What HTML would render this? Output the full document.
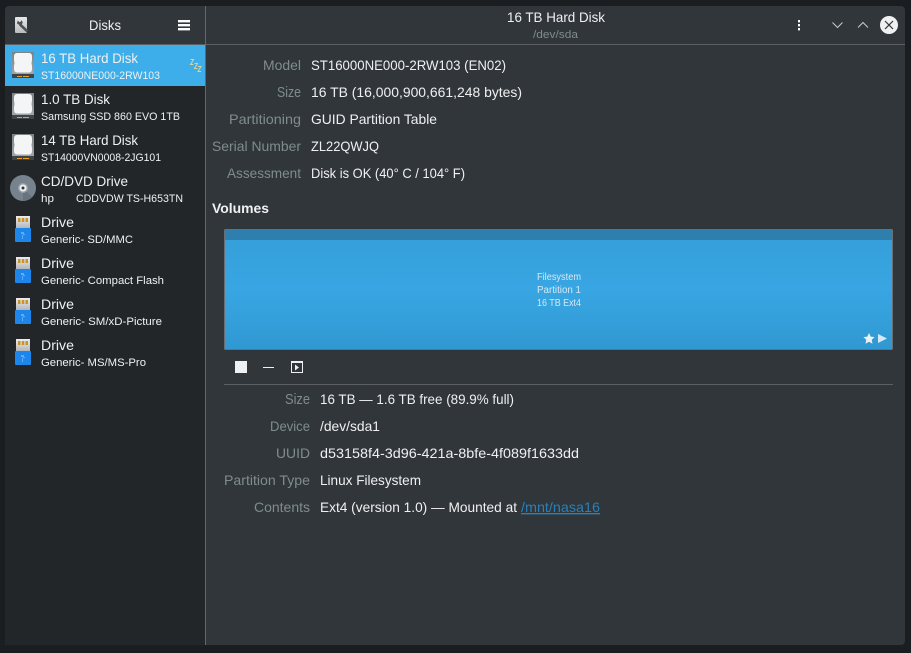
<!DOCTYPE html>
<html><head><meta charset="utf-8"><style>
html,body{margin:0;padding:0;background:#1b1e20;width:911px;height:653px;overflow:hidden}
svg{display:block}
text{font-family:"Liberation Sans",sans-serif;font-size:14px;fill:#eff0f1;white-space:pre}
.s{font-size:11px}
.l{fill:#7f8c8d}
.v{font-size:10px;fill:#d5e8f3}
</style></head><body>
<svg width="911" height="653" viewBox="0 0 911 653" xmlns="http://www.w3.org/2000/svg">
<defs>
<linearGradient id="vol" x1="0" y1="0" x2="0" y2="1"><stop offset="0" stop-color="#349ed8"/><stop offset=".5" stop-color="#38a6e3"/><stop offset="1" stop-color="#3098d2"/></linearGradient>
<linearGradient id="frame" x1="0" y1="0" x2="0" y2="1"><stop offset="0" stop-color="#7d8285"/><stop offset="1" stop-color="#a2a5a7"/></linearGradient>
<linearGradient id="conn" x1="0" y1="0" x2="0" y2="1"><stop offset="0" stop-color="#eceded"/><stop offset="1" stop-color="#b4b7b9"/></linearGradient>
<linearGradient id="doc" x1="0" y1="0" x2="0" y2="1"><stop offset="0" stop-color="#e6e7e8"/><stop offset="1" stop-color="#b9bcbe"/></linearGradient>
<g id="hd">
<rect x="0" y="0" width="22" height="22" fill="url(#frame)"/>
<path d="M5 1H17Q20 1 20 4.500V8L19.500 11L20 14V17Q20 20.500 17 20.500H5Q2 20.500 2 17V14L2.500 11L2 8V4.500Q2 1 5 1Z" fill="#f4f5f6"/>
<rect x="0" y="22" width="22" height="4" fill="#3f4448"/>
<rect x="5" y="24" width="5" height="1" fill="#f39c1f"/><rect x="11" y="24" width="6" height="1" fill="#f39c1f"/>
</g>
<g id="usb">
<rect x="1" y="0" width="14" height="12" fill="url(#conn)"/>
<rect x="3" y="2" width="2.500" height="4" fill="#c9922c"/><rect x="6.800" y="2" width="2.500" height="4" fill="#c9922c"/><rect x="10.500" y="2" width="2.500" height="4" fill="#c9922c"/>
<rect x="0" y="12" width="16" height="14" rx="1" fill="#1d86ec"/>
<path d="M6 17h3M9 18v1M7 20h1M7 22h1" stroke="#a9d3f8" stroke-width="1" fill="none"/>
</g>
</defs>
<rect x="5" y="6" width="900" height="639" rx="4" fill="#31363b"/>
<path d="M5 45H205V645H5Z" fill="#232629"/>
<rect x="5" y="44" width="900" height="1" fill="#5d6063"/>
<rect x="205" y="6" width="1" height="639" fill="#63676a"/>

<!-- header left -->
<rect x="15" y="17" width="12" height="16" rx="1" fill="url(#doc)"/>
<path d="M20 24.500L27.500 31.500" stroke="#4d5154" stroke-width="2.600" fill="none"/>
<path d="M17 23.500l.7-3 1.800 1.700 1.500-.8 .3-1.400 1.500 2.500-1.800 3.500z" fill="#4d5154"/>
<text x="89" y="30" textLength="32" lengthAdjust="spacingAndGlyphs">Disks</text>
<rect x="178" y="20" width="12" height="2.400" fill="#fcfcfc"/><rect x="178" y="24" width="12" height="2.400" fill="#fcfcfc"/><rect x="178" y="28" width="12" height="2.400" fill="#fcfcfc"/>

<!-- header right -->
<text x="507" y="22" textLength="98" lengthAdjust="spacingAndGlyphs">16 TB Hard Disk</text>
<text x="533" y="38" class="s l" textLength="45" lengthAdjust="spacingAndGlyphs">/dev/sda</text>
<rect x="798" y="20" width="2" height="2.400" fill="#fcfcfc"/><rect x="798" y="24" width="2" height="2.400" fill="#fcfcfc"/><rect x="798" y="28" width="2" height="2.400" fill="#fcfcfc"/>
<path d="M832.500 22.500l5 5 5-5" stroke="#c8cbcc" stroke-width="1" fill="none"/>
<path d="M858 27.500l5-5 5 5" stroke="#c8cbcc" stroke-width="1" fill="none"/>
<circle cx="889" cy="25" r="9" fill="#eff0f1"/>
<path d="M885 21l8 8M893 21l-8 8" stroke="#31363b" stroke-width="1.200"/>

<!-- sidebar -->
<rect x="5" y="45" width="200" height="41" fill="#3daee9"/>
<use href="#hd" x="12" y="52"/>
<text x="41" y="63" textLength="97" lengthAdjust="spacingAndGlyphs">16 TB Hard Disk</text>
<text x="41" y="79" class="s" textLength="119" lengthAdjust="spacingAndGlyphs">ST16000NE000-2RW103</text>
<path d="M190.500 59.500h3l-3 5h3M194.500 63.500h3l-3 5h3M198 66.500h3l-3 5h3" stroke="#d3d69c" stroke-width="1" fill="none"/>

<use href="#hd" x="12" y="93"/>
<text x="41" y="104" textLength="69" lengthAdjust="spacingAndGlyphs">1.0 TB Disk</text>
<text x="41" y="120" class="s" textLength="139" lengthAdjust="spacingAndGlyphs">Samsung SSD 860 EVO 1TB</text>

<use href="#hd" x="12" y="134"/>
<text x="41" y="145" textLength="97" lengthAdjust="spacingAndGlyphs">14 TB Hard Disk</text>
<text x="41" y="161" class="s" textLength="120" lengthAdjust="spacingAndGlyphs">ST14000VN0008-2JG101</text>

<circle cx="23" cy="188" r="13" fill="#76828d"/>
<path d="M23 188L32 197A13 13 0 0 1 23 201Z" fill="#68737d"/>
<circle cx="23" cy="188" r="5" fill="#9aa3ab"/>
<circle cx="23" cy="188" r="3.500" fill="#eff0f1"/>
<circle cx="23" cy="188" r="1.500" fill="#31363b"/>
<text x="41" y="186" textLength="87" lengthAdjust="spacingAndGlyphs">CD/DVD Drive</text>
<text x="41" y="202" class="s" textLength="13" lengthAdjust="spacingAndGlyphs">hp</text>
<text x="76" y="202" class="s" textLength="107" lengthAdjust="spacingAndGlyphs">CDDVDW TS-H653TN</text>

<use href="#usb" x="15" y="216"/>
<text x="41" y="227" textLength="33" lengthAdjust="spacingAndGlyphs">Drive</text>
<text x="41" y="243" class="s" textLength="92" lengthAdjust="spacingAndGlyphs">Generic- SD/MMC</text>

<use href="#usb" x="15" y="257"/>
<text x="41" y="268" textLength="33" lengthAdjust="spacingAndGlyphs">Drive</text>
<text x="41" y="284" class="s" textLength="123" lengthAdjust="spacingAndGlyphs">Generic- Compact Flash</text>

<use href="#usb" x="15" y="298"/>
<text x="41" y="309" textLength="33" lengthAdjust="spacingAndGlyphs">Drive</text>
<text x="41" y="325" class="s" textLength="121" lengthAdjust="spacingAndGlyphs">Generic- SM/xD-Picture</text>

<use href="#usb" x="15" y="339"/>
<text x="41" y="350" textLength="33" lengthAdjust="spacingAndGlyphs">Drive</text>
<text x="41" y="366" class="s" textLength="105" lengthAdjust="spacingAndGlyphs">Generic- MS/MS-Pro</text>

<!-- details -->
<text x="263" y="70" class="l" textLength="38" lengthAdjust="spacingAndGlyphs">Model</text>
<text x="277" y="97" class="l" textLength="24" lengthAdjust="spacingAndGlyphs" style="font-size:15px">Size</text>
<text x="229" y="124" class="l" textLength="72" lengthAdjust="spacingAndGlyphs">Partitioning</text>
<text x="212" y="151" class="l" textLength="89" lengthAdjust="spacingAndGlyphs">Serial Number</text>
<text x="227" y="178" class="l" textLength="74" lengthAdjust="spacingAndGlyphs">Assessment</text>
<text x="311" y="70" textLength="195" lengthAdjust="spacingAndGlyphs">ST16000NE000-2RW103 (EN02)</text>
<text x="311" y="97" textLength="211" lengthAdjust="spacingAndGlyphs">16 TB (16,000,900,661,248 bytes)</text>
<text x="311" y="124" textLength="126" lengthAdjust="spacingAndGlyphs">GUID Partition Table</text>
<text x="311" y="151" textLength="68" lengthAdjust="spacingAndGlyphs">ZL22QWJQ</text>
<text x="311" y="178" textLength="154" lengthAdjust="spacingAndGlyphs">Disk is OK (40° C / 104° F)</text>
<text x="212" y="213" style="font-weight:bold" textLength="57" lengthAdjust="spacingAndGlyphs">Volumes</text>

<!-- volume bar -->
<rect x="224.500" y="229.500" width="668" height="120" rx="1" fill="url(#vol)" stroke="#6a6f73"/>
<rect x="225" y="230" width="667" height="10" fill="#2f7fae"/>
<text x="537" y="280" class="v" textLength="44" lengthAdjust="spacingAndGlyphs">Filesystem</text>
<text x="537" y="293" class="v" textLength="44" lengthAdjust="spacingAndGlyphs">Partition 1</text>
<text x="537" y="306" class="v" textLength="44" lengthAdjust="spacingAndGlyphs">16 TB Ext4</text>
<path d="M869 333l1.700 3.600 3.900.5-2.900 2.700.8 3.900-3.500-2-3.500 2 .8-3.900-2.900-2.700 3.900-.5z" fill="#eff0f1"/>
<path d="M878 334v9l9-4.500z" fill="#d5e8f3"/>

<!-- toolbar -->
<rect x="235" y="361" width="12" height="12" fill="#eff0f1"/>
<rect x="263" y="367" width="11" height="1" fill="#eff0f1"/>
<rect x="291.500" y="361.500" width="11" height="11" fill="none" stroke="#eff0f1"/>
<rect x="291" y="361" width="12" height="2" fill="#eff0f1"/>
<path d="M295 364.500v6l4-3z" fill="#eff0f1"/>
<rect x="224" y="384" width="669" height="1" fill="#5d6063"/>

<text x="285" y="404" class="l" textLength="25" lengthAdjust="spacingAndGlyphs" style="font-size:15px">Size</text>
<text x="270" y="431" class="l" textLength="40" lengthAdjust="spacingAndGlyphs">Device</text>
<text x="276" y="458" class="l" textLength="34" lengthAdjust="spacingAndGlyphs">UUID</text>
<text x="224" y="485" class="l" textLength="86" lengthAdjust="spacingAndGlyphs">Partition Type</text>
<text x="254" y="512" class="l" textLength="56" lengthAdjust="spacingAndGlyphs">Contents</text>
<text x="320" y="404" textLength="194" lengthAdjust="spacingAndGlyphs">16 TB — 1.6 TB free (89.9% full)</text>
<text x="320" y="431" textLength="60" lengthAdjust="spacingAndGlyphs">/dev/sda1</text>
<text x="320" y="458" textLength="259" lengthAdjust="spacingAndGlyphs">d53158f4-3d96-421a-8bfe-4f089f1633dd</text>
<text x="320" y="485" textLength="101" lengthAdjust="spacingAndGlyphs">Linux Filesystem</text>
<text x="320" y="512" textLength="197" lengthAdjust="spacingAndGlyphs">Ext4 (version 1.0) — Mounted at</text>
<text x="521" y="512" style="fill:#2980b9" textLength="79" lengthAdjust="spacingAndGlyphs" text-decoration="underline">/mnt/nasa16</text>
</svg>
</body></html>
